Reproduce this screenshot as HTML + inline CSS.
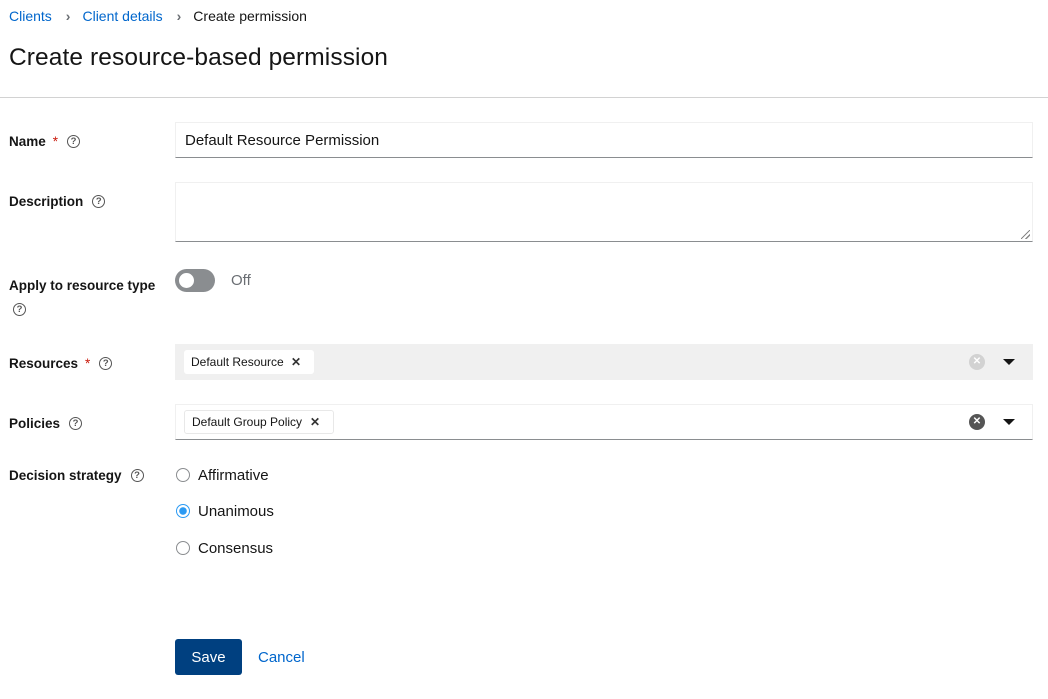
<!DOCTYPE html>
<html><head><meta charset="utf-8"><style>
*{box-sizing:border-box;margin:0;padding:0}
body{width:1048px;height:699px;background:#fff;font-family:"Liberation Sans",sans-serif;color:#151515;position:relative;overflow:hidden}
.a{position:absolute}
.lbl{position:absolute;left:9px;font-size:13.5px;font-weight:bold;line-height:18px}
.req{color:#c9190b;font-weight:normal;margin-left:7px}
.help{display:inline-block;width:13px;height:13px;border:1.4px solid #555;border-radius:50%;font-size:9.5px;line-height:11px;text-align:center;font-weight:bold;color:#555;vertical-align:middle;margin-left:9px;position:relative;top:-1px}
.chip{position:absolute;height:24px;background:#fff;border-radius:3px;font-size:12px;line-height:24px;padding-left:7px}
.chip b{position:absolute;font-size:12px;color:#333}
.radio{position:absolute;left:176px;width:14px;height:14px;border:1.5px solid #8a8d90;border-radius:50%}
.rl{position:absolute;left:198px;font-size:15px}
</style></head><body>
<div class="a" style="left:9px;top:7px;font-size:14px;line-height:18px"><span style="color:#0066cc">Clients</span><span style="color:#6a6e73;margin:0 12px 0 14px;font-weight:bold">›</span><span style="color:#0066cc">Client details</span><span style="color:#6a6e73;margin:0 12px 0 14px;font-weight:bold">›</span>Create permission</div>
<div class="a" style="left:9px;top:43px;font-size:24.5px;line-height:30px;letter-spacing:0.1px">Create resource-based permission</div>
<div class="a" style="left:0;top:97px;width:1048px;height:1px;background:#d2d2d2"></div>

<div class="lbl" style="top:133px">Name<span class="req">*</span><span class="help">?</span></div>
<div class="a" style="left:175px;top:122px;width:858px;height:36px;border:1px solid #f0f0f0;border-bottom-color:#8a8d90;font-size:15px;line-height:36px;padding-left:9px">Default Resource Permission</div>

<div class="lbl" style="top:193px">Description<span class="help">?</span></div>
<div class="a" style="left:175px;top:182px;width:858px;height:60px;border:1px solid #f0f0f0;border-bottom-color:#8a8d90"></div>
<div class="a" style="left:1021px;top:230px;width:9px;height:9px;background:linear-gradient(135deg,transparent 45%,#888 45%,#888 55%,transparent 55%,transparent 72%,#888 72%,#888 82%,transparent 82%)"></div>

<div class="lbl" style="top:277px">Apply to resource type</div>
<div class="a" style="left:4px;top:302px"><span class="help">?</span></div>
<div class="a" style="left:175px;top:269px;width:40px;height:23px;border-radius:12px;background:#8a8d90"></div>
<div class="a" style="left:179px;top:273px;width:15px;height:15px;border-radius:50%;background:#fff"></div>
<div class="a" style="left:231px;top:272px;font-size:15px;color:#6a6e73">Off</div>

<div class="lbl" style="top:355px">Resources<span class="req">*</span><span class="help">?</span></div>
<div class="a" style="left:175px;top:344px;width:858px;height:36px;background:#f0f0f0"></div>
<div class="chip" style="left:184px;top:350px;width:130px">Default Resource<b style="left:107px">✕</b></div>
<div class="a" style="left:969px;top:354px;width:16px;height:16px;border-radius:50%;background:#d2d2d2;color:#fff;font-size:10px;line-height:16px;text-align:center;font-weight:bold">✕</div>
<div class="a" style="left:1003px;top:359px;border-left:6px solid transparent;border-right:6px solid transparent;border-top:6px solid #151515"></div>

<div class="lbl" style="top:415px">Policies<span class="help">?</span></div>
<div class="a" style="left:175px;top:404px;width:858px;height:36px;border:1px solid #f0f0f0;border-bottom-color:#8a8d90"></div>
<div class="chip" style="left:184px;top:410px;width:150px;border:1px solid #e8e8e8;line-height:22px">Default Group Policy<b style="left:125px">✕</b></div>
<div class="a" style="left:969px;top:414px;width:16px;height:16px;border-radius:50%;background:#555;color:#fff;font-size:10px;line-height:16px;text-align:center;font-weight:bold">✕</div>
<div class="a" style="left:1003px;top:419px;border-left:6px solid transparent;border-right:6px solid transparent;border-top:6px solid #151515"></div>

<div class="lbl" style="top:467px">Decision strategy<span class="help">?</span></div>
<div class="radio" style="top:468px"></div><div class="rl" style="top:467px">Affirmative</div>
<div class="radio" style="top:504px;border-color:#2b9af3;background:radial-gradient(circle,#2b9af3 0 3.5px,#fff 4px)"></div><div class="rl" style="top:503px">Unanimous</div>
<div class="radio" style="top:541px"></div><div class="rl" style="top:540px">Consensus</div>

<div class="a" style="left:175px;top:639px;width:67px;height:36px;background:#004080;border-radius:3px;color:#fff;font-size:15px;line-height:38px;text-align:center">Save</div>
<div class="a" style="left:258px;top:649px;font-size:15px;color:#0066cc">Cancel</div>
</body></html>
